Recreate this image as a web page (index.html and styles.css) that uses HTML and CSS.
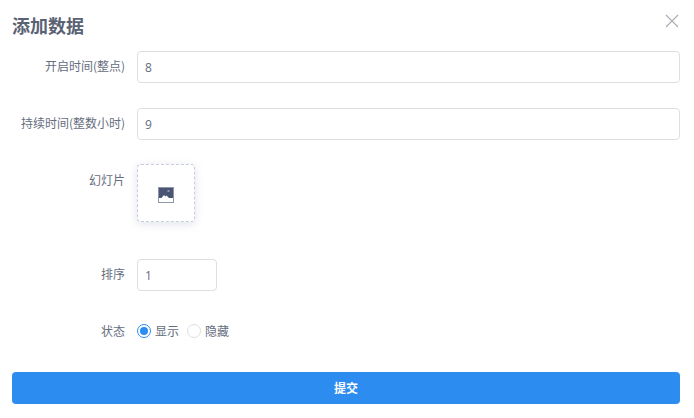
FILE: index.html
```
<!DOCTYPE html>
<html lang="zh">
<head>
<meta charset="utf-8">
<title>添加数据</title>
<link rel="stylesheet" href="styles.css">
</head>
<body>
<main class="dialog">
  <header class="head">
    <h1 class="title">添加数据</h1>
    <button class="close" type="button" aria-label="关闭">
      <svg width="14" height="14" viewBox="0 0 14 14"><path d="M1 1l12 12M13 1L1 13" stroke="#a9adb3" stroke-width="1.1" fill="none"/></svg>
    </button>
  </header>
  <form class="form">
    <div class="row row-text">
      <label class="label">开启时间(整点)</label>
      <input class="input" type="text" value="8">
    </div>
    <div class="row row-text">
      <label class="label">持续时间(整数小时)</label>
      <input class="input" type="text" value="9">
    </div>
    <div class="row row-upload">
      <label class="label label-upload">幻灯片</label>
      <div class="upload">
        <svg class="upload-icon" width="16" height="16" viewBox="0 0 16 16">
          <rect x="0" y="0" width="16" height="16" fill="#8f96a8"/>
          <rect x="1" y="1" width="14" height="10" fill="#4a5474"/>
          <rect x="1" y="11" width="14" height="4" fill="#fff"/>
          <path d="M3.500 11l2.500-3 1.500 1.500 1-1 2.500 2.500z" fill="#fff"/>
          <rect x="9.500" y="3" width="2" height="2" fill="#8f96a8"/>
        </svg>
      </div>
    </div>
    <div class="row row-sort">
      <label class="label">排序</label>
      <input class="input input-small" type="text" value="1">
    </div>
    <div class="row row-radio">
      <label class="label">状态</label>
      <div class="radios">
        <span class="radio"><i class="dot dot-on"></i>显示</span>
        <span class="radio"><i class="dot"></i>隐藏</span>
      </div>
    </div>
    <button class="submit" type="button">提交</button>
  </form>
</main>
</body>
</html>
```
FILE: styles.css
```
* { box-sizing: border-box; }
html, body { margin: 0; padding: 0; background: #fff; }
body {
  width: 694px;
  height: 418px;
  overflow: hidden;
  font-family: "Noto Sans CJK SC", "Liberation Sans", sans-serif;
  color: #666d7e;
  font-size: 12px;
}
.dialog { padding: 14px 14px 14px 12px; }
.head { display: flex; justify-content: space-between; align-items: flex-start; height: 37px; }
.title { margin: 0; font-size: 18px; line-height: 23px; font-weight: 700; color: #5a6274; }
.close { border: 0; padding: 0; background: none; width: 14px; height: 14px; margin-right: 1px; display: block; }
.close svg { display: block; }
.form { display: flex; flex-direction: column; }
.row { display: flex; align-items: flex-start; }
.row-text { height: 32px; margin-bottom: 25px; }
.row-upload { height: 58px; margin-top: -1px; margin-bottom: 37px; }
.row-sort { height: 32px; margin-bottom: 24px; }
.row-radio { height: 32px; margin-bottom: 25px; align-items: center; }
.label { width: 125px; flex: none; padding-right: 12px; text-align: right; line-height: 30px; }
.label-upload { line-height: 32px; }
.input {
  flex: 1;
  height: 32px;
  border: 1px solid #dcdee2;
  border-radius: 4px;
  padding: 0 7px;
  font: 12px "Open Sans", "Noto Sans CJK SC", sans-serif;
  color: #666d7e;
  background: #fff;
  outline: none;
}
.input-small { flex: none; width: 80px; }
.upload {
  width: 58px;
  height: 58px;
  border: 1px dashed #c8cddc;
  border-radius: 4px;
  box-shadow: 0 2px 8px rgba(180,185,205,.4);
  display: flex;
  align-items: center;
  justify-content: center;
  background: #fff;
}
.upload-icon { display: block; margin-top: 4px; }
.radios { display: flex; gap: 8px; }
.radio { display: flex; align-items: center; gap: 4px; line-height: 16px; }
.dot { width: 14px; height: 14px; border-radius: 50%; border: 1px solid #dcdee2; background: #fff; display: block; }
.dot-on { border-color: #2d8cf0; position: relative; }
.dot-on::after { content: ""; position: absolute; left: 2px; top: 2px; width: 8px; height: 8px; border-radius: 50%; background: #2d8cf0; }
.submit {
  height: 32px;
  width: 668px;
  border: 0;
  border-radius: 4px;
  background: #2d8cf0;
  color: #fff;
  padding: 0 0 2px;
  font: 700 12px "Noto Sans CJK SC", "Liberation Sans", sans-serif;
}
```
